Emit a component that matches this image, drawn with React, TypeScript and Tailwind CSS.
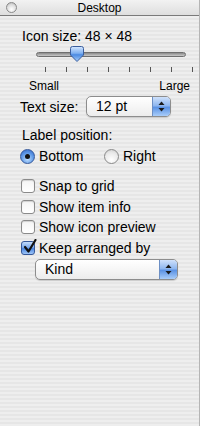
import React from 'react';

const font = { fontFamily: '"Liberation Sans", Arial, sans-serif' };

const Arrows: React.FC = () => (
  <svg width="7" height="11" viewBox="0 0 7 11">
    <path d="M3.5 0.5 L6.5 4 L0.5 4 Z" fill="#1a1a1a" />
    <path d="M3.5 10.5 L6.5 7 L0.5 7 Z" fill="#1a1a1a" />
  </svg>
);

const Popup: React.FC<{ label: string; className: string }> = ({ label, className }) => (
  <div
    className={`flex h-[21px] rounded-[5px] border border-[#8d8d8d] bg-[linear-gradient(#ffffff,#f6f6f6_50%,#ececec)] shadow-[0_1px_1px_rgba(0,0,0,0.15)] overflow-hidden ${className}`}
  >
    <div className="flex-1 pl-[9px] text-[14px] leading-[19px] text-black">{label}</div>
    <div className="flex w-[18px] items-center justify-center border-l border-[#6c8fc4] bg-[linear-gradient(#cfe1fb,#8fb7ef_45%,#5c93e4_55%,#a9cdf9)]">
      <Arrows />
    </div>
  </div>
);

const Radio: React.FC<{ checked?: boolean }> = ({ checked }) =>
  checked ? (
    <div className="flex h-[15px] w-[15px] shrink-0 items-center justify-center rounded-full border border-[#35589a] bg-[radial-gradient(circle_at_50%_70%,#bfe0ff,#5d97e6_55%,#2d63c4)]">
      <div className="h-[5px] w-[5px] rounded-full bg-[#111]" />
    </div>
  ) : (
    <div className="h-[15px] w-[15px] shrink-0 rounded-full border border-[#8a8a8a] bg-[radial-gradient(circle_at_50%_75%,#ffffff,#e9e9e9_60%,#c8c8c8)]" />
  );

const Check: React.FC<{ checked?: boolean }> = ({ checked }) =>
  checked ? (
    <div className="relative h-[14px] w-[14px] shrink-0 rounded-[3px] border border-[#35589a] bg-[linear-gradient(#c4dcfb,#7aa9ec_45%,#4a86e0_55%,#9fc6f8)]">
      <svg className="absolute left-[1px] top-[-3px]" width="14" height="15" viewBox="0 0 14 15">
        <path d="M2 8 L5.5 12.5 L12.5 1" fill="none" stroke="#111" strokeWidth="2.2" strokeLinecap="round" strokeLinejoin="round" />
      </svg>
    </div>
  ) : (
    <div className="h-[14px] w-[14px] shrink-0 rounded-[3px] border border-[#8a8a8a] bg-[linear-gradient(#f4f4f4,#ffffff)] shadow-[inset_0_1px_1px_rgba(0,0,0,0.15)]" />
  );

const CheckRow: React.FC<{ label: string; checked?: boolean }> = ({ label, checked }) => (
  <div className="flex h-[20.5px] items-center gap-[4px]">
    <Check checked={checked} />
    <span className="text-[14px] leading-[16px] text-black">{label}</span>
  </div>
);

export default function App() {
  const ticks = [0, 1, 2, 3, 4, 5, 6, 7];
  return (
    <div
      style={font}
      className="flex h-[426px] w-[200px] flex-col border-r border-[#b5b5b5] bg-[repeating-linear-gradient(180deg,#eeeeee_0px,#eeeeee_2px,#e6e6e6_2px,#e6e6e6_4px)]"
    >
      {/* title bar */}
      <div className="relative flex h-[16px] items-center justify-center border-b border-[#7a7a7a] bg-[linear-gradient(#f2f2f2,#dedede)]">
        <div className="absolute left-[6px] top-[2px] h-[11px] w-[11px] rounded-full border border-[#8a8a8a] bg-[radial-gradient(circle_at_50%_70%,#ffffff,#dcdcdc_60%,#a8a8a8)]" />
        <span className="text-[12px] leading-none text-black">Desktop</span>
      </div>

      <div className="flex flex-col pl-[20px] pr-[20px]">
        <div className="mt-[12px] pl-[2px] text-[14px] leading-[16px] text-black">Icon size: 48 × 48</div>

        {/* slider */}
        <div className="relative mt-[1px] h-[28px]">
          <div className="absolute left-[16px] right-[-7px] top-[7px] h-[5px] rounded-full border border-[#6f6f6f] bg-[linear-gradient(#8a8a8a,#c9c9c9)]" />
          <svg className="absolute left-[50px] top-[1px]" width="14" height="16" viewBox="0 0 14 16">
            <defs>
              <linearGradient id="th" x1="0" y1="0" x2="0" y2="1">
                <stop offset="0" stopColor="#d6e8ff" />
                <stop offset="0.45" stopColor="#7fb0f0" />
                <stop offset="0.55" stopColor="#4b8ae2" />
                <stop offset="1" stopColor="#a9d0fb" />
              </linearGradient>
            </defs>
            <path d="M2.5 0.5 H11.5 Q13.5 0.5 13.5 2.5 V9 L7 15.5 L0.5 9 V2.5 Q0.5 0.5 2.5 0.5 Z" fill="url(#th)" stroke="#3a5d9c" />
          </svg>
          <div className="absolute left-[25px] right-[-14px] top-[22px] flex justify-between">
            {ticks.map((t) => (
              <div key={t} className="h-[5px] w-[1px] bg-[#555]" />
            ))}
          </div>
        </div>

        <div className="mt-[6px] flex justify-between pl-[9px] text-[12px] leading-[14px] text-black">
          <span>Small</span>
          <span className="mr-[-11px]">Large</span>
        </div>

        <div className="mt-[3px] flex items-center">
          <span className="w-[66px] text-[14px] leading-[16px] text-black">Text size:</span>
          <Popup label="12 pt" className="w-[85px]" />
        </div>

        <div className="mt-[10px] pl-[2px] text-[14px] leading-[16px] text-black">Label position:</div>
        <div className="mt-[5px] flex items-center">
          <Radio checked />
          <span className="ml-[4px] w-[65px] text-[14px] leading-[16px] text-black">Bottom</span>
          <Radio />
          <span className="ml-[4px] text-[14px] leading-[16px] text-black">Right</span>
        </div>

        <div className="mt-[12px] flex flex-col pl-[1px]">
          <CheckRow label="Snap to grid" />
          <CheckRow label="Show item info" />
          <CheckRow label="Show icon preview" />
          <CheckRow label="Keep arranged by" checked />
        </div>

        <Popup label="Kind" className="ml-[15px] mt-[1px] w-[143px]" />
      </div>
    </div>
  );
}
